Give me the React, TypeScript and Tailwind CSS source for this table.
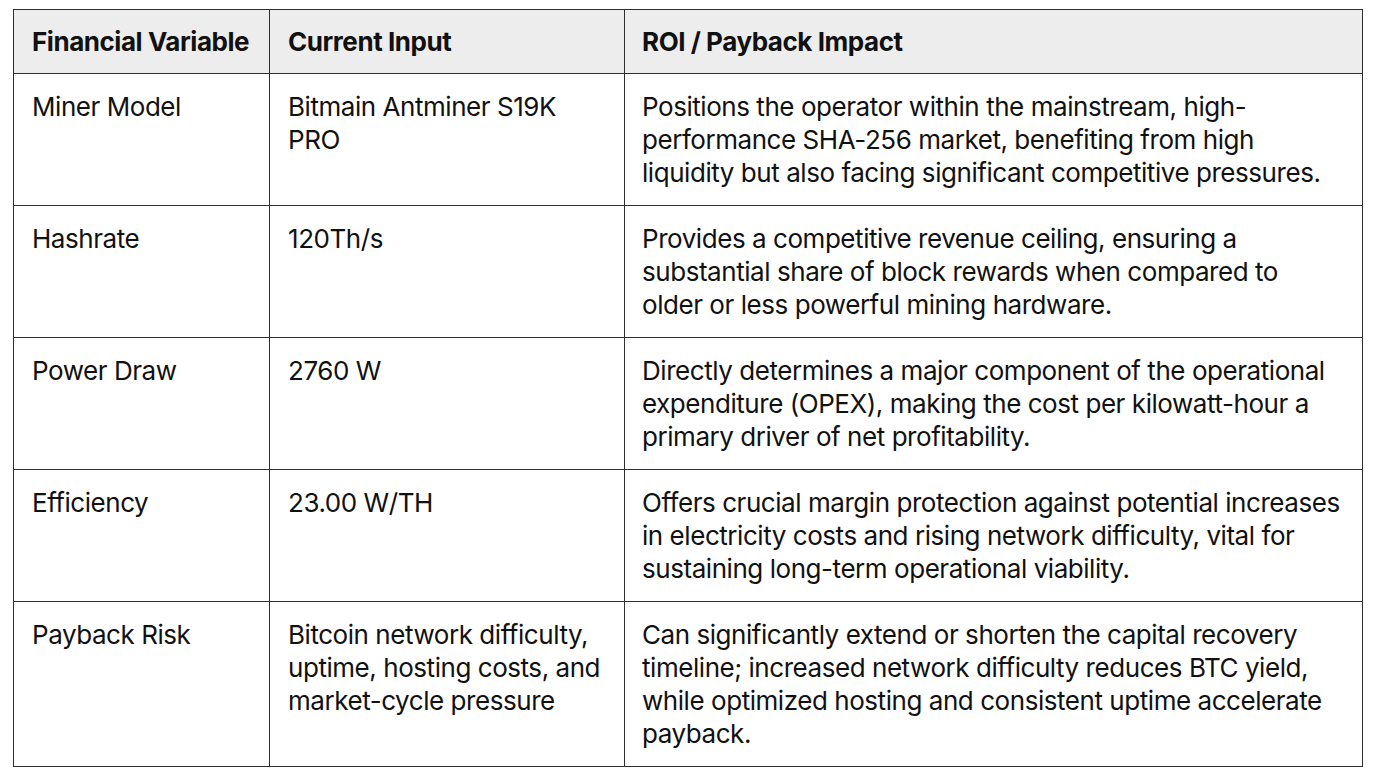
const rows = [
  {
    variable: "Miner Model",
    input: "Bitmain Antminer S19K PRO",
    impact:
      "Positions the operator within the mainstream, high-performance SHA-256 market, benefiting from high liquidity but also facing significant competitive pressures.",
  },
  {
    variable: "Hashrate",
    input: "120Th/s",
    impact:
      "Provides a competitive revenue ceiling, ensuring a substantial share of block rewards when compared to older or less powerful mining hardware.",
  },
  {
    variable: "Power Draw",
    input: "2760 W",
    impact:
      "Directly determines a major component of the operational expenditure (OPEX), making the cost per kilowatt-hour a primary driver of net profitability.",
  },
  {
    variable: "Efficiency",
    input: "23.00 W/TH",
    impact:
      "Offers crucial margin protection against potential increases in electricity costs and rising network difficulty, vital for sustaining long-term operational viability.",
  },
  {
    variable: "Payback Risk",
    input: "Bitcoin network difficulty, uptime, hosting costs, and market-cycle pressure",
    impact:
      "Can significantly extend or shorten the capital recovery timeline; increased network difficulty reduces BTC yield, while optimized hosting and consistent uptime accelerate payback.",
  },
];

const App = () => {
  return (
    <div className="min-h-screen bg-white pt-[9px] pl-[13px] font-['Inter',sans-serif] text-[#111]">
      <table className="table-fixed border-collapse w-[1349px] text-[26px] leading-[33px] tracking-[-0.45px]">
        <colgroup>
          <col className="w-[256px]" />
          <col className="w-[355px]" />
          <col className="w-[738px]" />
        </colgroup>
        <thead>
          <tr className="bg-[#ededed]">
            <th className="border-[1.5px] border-[#2e2e2e] pl-[18px] pr-[10px] py-[15px] text-left font-bold whitespace-nowrap">Financial Variable</th>
            <th className="border-[1.5px] border-[#2e2e2e] px-[18px] py-[15px] text-left font-bold">Current Input</th>
            <th className="border-[1.5px] border-[#2e2e2e] px-[17px] py-[15px] text-left font-bold">ROI / Payback Impact</th>
          </tr>
        </thead>
        <tbody>
          {rows.map((row) => (
            <tr key={row.variable}>
              <td className="border-[1.5px] border-[#2e2e2e] px-[18px] py-[16px] align-top">{row.variable}</td>
              <td className="border-[1.5px] border-[#2e2e2e] px-[18px] py-[16px] align-top">{row.input}</td>
              <td className="border-[1.5px] border-[#2e2e2e] px-[17px] py-[16px] align-top">{row.impact}</td>
            </tr>
          ))}
        </tbody>
      </table>
    </div>
  );
};

export default App;
